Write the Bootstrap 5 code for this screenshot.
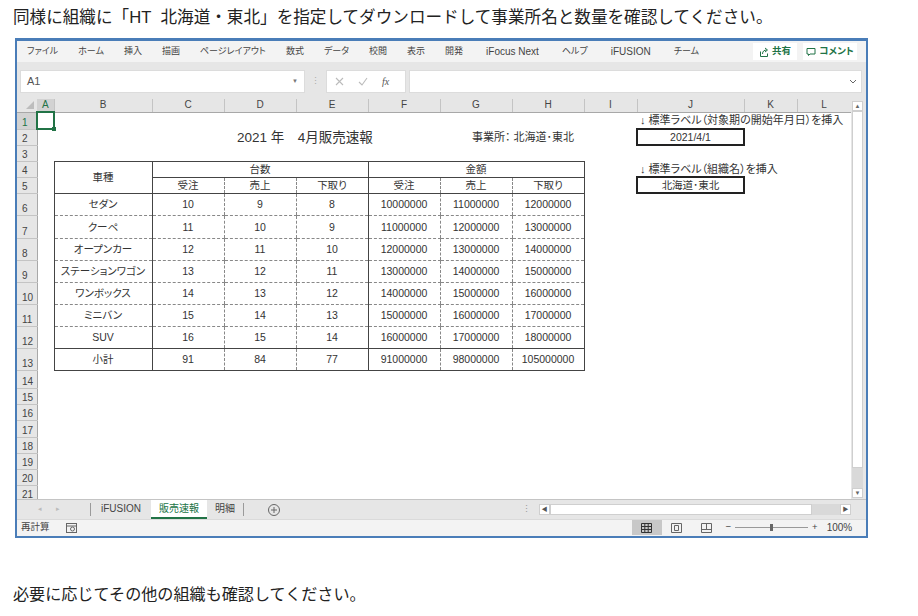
<!DOCTYPE html>
<html lang="ja">
<head>
<meta charset="UTF-8" />
<meta name="viewport" content="width=device-width, initial-scale=1.0" />
<title>販売速報</title>
<link href="https://cdn.jsdelivr.net/npm/bootstrap@5.3.0/dist/css/bootstrap.min.css" rel="stylesheet" />
<script src="https://cdn.jsdelivr.net/npm/bootstrap@5.3.0/dist/js/bootstrap.bundle.min.js"></script>
<style>
html, body { background: #fff; }
body { font-family: "Liberation Sans", "Noto Sans CJK JP", sans-serif; color: #222; height: 616px; overflow: hidden; }
.guide-top { font-size: 16.6px; line-height: 20px; padding: 8px 0 0 13px; margin: 0 0 10px; white-space: nowrap; }
.guide-bottom { font-size: 16.1px; line-height: 20px; padding-left: 13px; margin: 46px 0 0; white-space: nowrap; }
.xl-window { width: 853px; height: 500px; margin-left: 15px; border: 2px solid #4a7db8; border-top-width: 3px; background: #f3f3f3; color: #444; font-size: 10px; font-feature-settings: "palt"; }
.xl-tabs { height: 21px; padding: 0 9px 0 10px; background: #f3f3f3; }
.xl-tabs span { white-space: nowrap; }
.xl-tablist { gap: 20px; font-size: 9px; }
.xl-tablatin { font-size: 10px; margin: 0 3px; }
.xl-action { height: 17px; background: #fff; color: #217346; font-weight: 700; font-size: 9.5px; gap: 3px; }
.xl-share { width: 44px; }
.xl-comment { width: 54px; }
.xl-formula { height: 37px; background: #e6e6e6; padding: 8px 4px 6px 3px; }
.xl-box { background: #fff; border: 1px solid #dcdcdc; height: 23px; }
.xl-name { width: 285px; padding: 0 6px; font-size: 11px; color: #555; }
.xl-dots { width: 21px; text-align: center; color: #aaa; font-size: 9px; }
.xl-fx { width: 80px; margin-right: 3px; padding: 0 8px; gap: 14px; }
.xl-body { height: 400px; background: #fff; }
.xl-cells { width: 834px; height: 400px; overflow: hidden; }
.xl-sheet { table-layout: fixed; width: 834px; font-size: 10.5px; color: #333; }
.xl-sheet th, .xl-sheet td { padding: 0; text-align: center; white-space: nowrap; font-weight: 400; line-height: 1; overflow: visible; }
.xl-sheet .colhead th { height: 13px; background: #e6e6e6; border-bottom: 1px solid #a8a8a8; border-right: 1px solid #c4c4c4; font-size: 10px; color: #444; }
.xl-sheet .colhead th.is-active { background: #d2d2d2; color: #217346; border-bottom: 2px solid #217346; }
.xl-sheet .colhead th.corner { border-right: 0; text-align: right; padding-right: 3px; }
.xl-sheet th.rownum { background: #e6e6e6; border-bottom: 1px solid #c4c4c4; border-right: 1px solid #a8a8a8; font-size: 10px; vertical-align: bottom; text-align: left; padding: 0 0 1px 5px; color: #444; }
.xl-sheet th.rownum.is-active { background: #d2d2d2; color: #217346; border-right: 2px solid #217346; }
.xl-sheet td { vertical-align: middle; padding-top: 1px; }
.cell-active { border: 2px solid #217346; position: relative; }
.cell-active::after { content: ""; position: absolute; right: -3px; bottom: -3px; width: 4px; height: 4px; background: #217346; border: 0; }
.cell-title { font-size: 13.5px; text-align: left !important; padding-left: 85px !important; }
.cell-office { text-align: left !important; padding-left: 32px !important; font-size: 11px; }
.cell-note { text-align: left !important; padding-left: 3px !important; font-size: 11px; }
.cell-boxed { border: 2px solid #222; }
.rule-head { border: 1px solid #444; }
.b-solid-l { border-left: 1px solid #444; }
.b-solid-r { border-right: 1px solid #444; }
.b-solid-t { border-top: 1px solid #444; }
.b-solid-b { border-bottom: 1px solid #444; }
.b-dash-l { border-left: 1px dashed #888; }
.b-dash-b { border-bottom: 1px dashed #888; }
.xl-vscroll { width: 15px; background: #e6e6e6; padding: 2px 2px 0 1px; }
.xl-vbtn { height: 10px; width: 11px; background: #fff; border: 1px solid #cfcfcf; color: #666; font-size: 6px; line-height: 8px; text-align: center; }
.xl-vthumb { height: 357px; width: 11px; background: #fff; border: 1px solid #cfcfcf; }
.xl-vtrack { width: 11px; background: #d9d9d9; height: 20px; }
.xl-sheetbar { height: 20px; background: #e6e6e6; border-top: 1px solid #c4c4c4; font-size: 10px; }
.xl-arrows { width: 73px; gap: 14px; padding-left: 21px; color: #bbb; font-size: 7px; }
.xl-sep { width: 1px; height: 13px; background: #9a9a9a; }
.xl-sheettab { padding: 0 10px; white-space: nowrap; height: 19px; line-height: 18px; }
.xl-sheettab.is-on { background: #fff; color: #217346; padding: 0; width: 56px; text-align: center; border-bottom: 2px solid #217346; }
.xl-sheettab.is-plain { padding: 0 8px; width: 36px; }
.xl-plus { margin-left: 24px; width: 12px; height: 12px; }
.xl-hdots { margin: 0 7px 0 240px; width: 12px; color: #999; font-size: 9px; text-align: center; }
.xl-hbtn { width: 11px; height: 11px; background: #fff; border: 1px solid #cfcfcf; font-size: 6px; line-height: 9px; color: #555; text-align: center; }
.xl-hthumb { width: 262px; height: 11px; background: #fff; border: 1px solid #cfcfcf; }
.xl-htrack { width: 28px; height: 11px; background: #d9d9d9; }
.xl-status { height: 16px; background: #f3f3f3; border-top: 1px solid #dadada; font-size: 9.5px; }
.xl-view { width: 30px; height: 15px; }
.xl-view.is-on { background: #c8c8c8; margin-left: 555px; }
.xl-zoombar { width: 73px; height: 1px; background: #999; position: relative; margin: 0 4px; }
.xl-zoomthumb { position: absolute; left: 35px; top: -3px; width: 3px; height: 7px; background: #666; }
.xl-pct { font-size: 10px; margin-left: 9px; }
</style>
</head>
<body class="m-0">
<p class="guide-top">同様に組織に「HT&nbsp;&nbsp;北海道・東北」を指定してダウンロードして事業所名と数量を確認してください。</p>

<div class="xl-window d-flex flex-column">
  <div class="xl-tabs d-flex align-items-center justify-content-between">
    <div class="xl-tablist d-flex align-items-center">
      <span>ファイル</span><span>ホーム</span><span>挿入</span><span>描画</span><span>ページレイアウト</span><span>数式</span><span>データ</span><span>校閲</span><span>表示</span><span>開発</span><span class="xl-tablatin">iFocus Next</span><span>ヘルプ</span><span class="xl-tablatin">iFUSION</span><span>チーム</span>
    </div>
    <div class="d-flex" style="gap:6px">
      <div class="xl-action xl-share d-flex align-items-center justify-content-center">
        <svg width="10" height="10" viewBox="0 0 10 10" fill="none" stroke="#217346"><path d="M1.500 4.500v5h7v-3M3.500 7c0-3 2-4 4-4M6 1l2.500 2L6 5"/></svg><span>共有</span>
      </div>
      <div class="xl-action xl-comment d-flex align-items-center justify-content-center">
        <svg width="10" height="10" viewBox="0 0 10 10" fill="none" stroke="#217346"><path d="M1 1.500h8v5.500H4L2.500 8.500V7H1z"/></svg><span>コメント</span>
      </div>
    </div>
  </div>

  <div class="xl-formula d-flex align-items-stretch">
    <div class="xl-box xl-name d-flex align-items-center justify-content-between"><span>A1</span><span style="font-size:6px;color:#777">▼</span></div>
    <div class="xl-dots d-flex align-items-center justify-content-center">⋮</div>
    <div class="xl-box xl-fx d-flex align-items-center">
      <svg width="9" height="9" viewBox="0 0 9 9" stroke="#bbb" fill="none" stroke-width="1.100"><path d="M1 1l7 7M8 1L1 8"/></svg>
      <svg width="10" height="9" viewBox="0 0 10 9" stroke="#bbb" fill="none" stroke-width="1.100"><path d="M1 5l3 3 5-7"/></svg>
      <span style="font-family:'Liberation Serif',serif;font-style:italic;font-size:10px;color:#555">fx</span>
    </div>
    <div class="xl-box flex-grow-1 d-flex align-items-center justify-content-end pe-1"><svg width="8" height="5" viewBox="0 0 8 5" fill="none" stroke="#666"><path d="M1 1l3 3 3-3"/></svg></div>
  </div>

  <div class="xl-body d-flex">
    <div class="xl-cells">
      <table class="xl-sheet">
        <colgroup>
          <col style="width:20px" /><col style="width:17px" /><col style="width:98px" /><col style="width:72px" /><col style="width:72px" /><col style="width:72px" /><col style="width:72px" /><col style="width:72px" /><col style="width:72px" /><col style="width:53px" /><col style="width:107px" /><col style="width:53px" /><col style="width:54px" />
        </colgroup>
        <tbody id="sheetBody">
          <tr class="colhead">
            <th class="corner"><svg class="d-block ms-auto" width="8" height="8" viewBox="0 0 8 8"><path d="M8 0v8H0z" fill="#bdbdbd"/></svg></th>
            <th class="is-active">A</th><th>B</th><th>C</th><th>D</th><th>E</th><th>F</th><th>G</th><th>H</th><th>I</th><th>J</th><th>K</th><th>L</th>
          </tr>
          <tr style="height:17px"><th class="rownum is-active">1</th><td class="cell-active"></td><td></td><td></td><td></td><td></td><td></td><td></td><td></td><td></td><td colspan="3" class="cell-note">↓ 標準ラベル（対象期の開始年月日）を挿入</td></tr>
          <tr style="height:16px"><th class="rownum">2</th><td></td><td></td><td colspan="4" class="cell-title">2021 年　4月販売速報</td><td colspan="2" class="cell-office">事業所： 北海道･東北</td><td></td><td class="cell-boxed">2021/4/1</td><td></td><td></td></tr>
          <tr style="height:16px"><th class="rownum">3</th><td colspan="12"></td></tr>
          <tr style="height:16px"><th class="rownum">4</th><td></td><td rowspan="2" class="rule-head">車種</td><td colspan="3" class="rule-head">台数</td><td colspan="3" class="rule-head">金額</td><td></td><td colspan="3" class="cell-note">↓ 標準ラベル（組織名）を挿入</td></tr>
          <tr style="height:16px"><th class="rownum">5</th><td></td><td class="b-solid-l b-solid-b">受注</td><td class="b-dash-l b-solid-b">売上</td><td class="b-dash-l b-solid-b">下取り</td><td class="b-solid-l b-solid-b">受注</td><td class="b-dash-l b-solid-b">売上</td><td class="b-dash-l b-solid-b b-solid-r">下取り</td><td></td><td class="cell-boxed">北海道･東北</td><td></td><td></td></tr>
        </tbody>
      </table>
    </div>
    <div class="xl-vscroll d-flex flex-column">
      <div class="xl-vbtn">▲</div>
      <div class="xl-vthumb"></div>
      <div class="xl-vtrack"></div>
      <div class="xl-vbtn">▼</div>
    </div>
  </div>

  <div class="xl-sheetbar d-flex align-items-center">
    <div class="xl-arrows d-flex"><span>◂</span><span>▸</span></div>
    <div class="xl-sep"></div>
    <div class="xl-sheettab">iFUSION</div>
    <div class="xl-sheettab is-on">販売速報</div>
    <div class="xl-sheettab is-plain">明細</div>
    <div class="xl-sep"></div>
    <svg class="xl-plus" viewBox="0 0 12 12" fill="none" stroke="#666"><circle cx="6" cy="6" r="5.500"/><path d="M6 3v6M3 6h6"/></svg>
    <div class="xl-hdots">⋮</div>
    <div class="xl-hbtn">◀</div>
    <div class="xl-hthumb"></div>
    <div class="xl-htrack"></div>
    <div class="xl-hbtn">▶</div>
  </div>

  <div class="xl-status d-flex align-items-center">
    <span class="ps-1">再計算</span>
    <svg class="ms-3" width="11" height="10" viewBox="0 0 11 10" fill="none" stroke="#666"><rect x=".5" y=".5" width="10" height="9"/><path d="M.5 3h10"/><circle cx="6.500" cy="6" r="2"/></svg>
    <div class="xl-view is-on d-flex align-items-center justify-content-center">
      <svg width="11" height="10" viewBox="0 0 11 10" fill="none" stroke="#333"><path d="M.5.5h10v9H.5zM.5 3.500h10M.5 6.500h10M3.800.5v9M7.200.5v9"/></svg>
    </div>
    <div class="xl-view d-flex align-items-center justify-content-center">
      <svg width="11" height="10" viewBox="0 0 11 10" fill="none" stroke="#666"><path d="M.5.5h10v9H.5zM3.500 2.500h4v5h-4z"/></svg>
    </div>
    <div class="xl-view d-flex align-items-center justify-content-center">
      <svg width="11" height="10" viewBox="0 0 11 10" fill="none" stroke="#666"><path d="M.5.5h10v9H.5zM.5 6.500h10M5.500.5v6"/></svg>
    </div>
    <span class="ms-1">−</span>
    <div class="xl-zoombar"><div class="xl-zoomthumb"></div></div>
    <span>+</span>
    <span class="xl-pct">100%</span>
  </div>
</div>

<p class="guide-bottom">必要に応じてその他の組織も確認してください。</p>

<script>
// データ行をまとめて生成
var rows = [
    ["セダン", 10, 9, 8, 10000000, 11000000, 12000000, 22],
    ["クーペ", 11, 10, 9, 11000000, 12000000, 13000000, 23],
    ["オープンカー", 12, 11, 10, 12000000, 13000000, 14000000, 22],
    ["ステーションワゴン", 13, 12, 11, 13000000, 14000000, 15000000, 22],
    ["ワンボックス", 14, 13, 12, 14000000, 15000000, 16000000, 22],
    ["ミニバン", 15, 14, 13, 15000000, 16000000, 17000000, 22],
    ["SUV", 16, 15, 14, 16000000, 17000000, 18000000, 22],
    ["小計", 91, 84, 77, 91000000, 98000000, 105000000, 22]
];
var body = document.getElementById("sheetBody");
var html = "";
rows.forEach(function (r, i) {
    var last = i === rows.length - 1;
    var bottom = last ? " b-solid-b" : (i === rows.length - 2 ? " b-solid-b" : " b-dash-b");
    html += '<tr style="height:' + r[7] + 'px"><th class="rownum">' + (i + 6) + "</th><td></td>";
    html += '<td class="b-solid-l b-solid-r' + bottom + '">' + r[0] + "</td>";
    for (var c = 1; c <= 6; c++) {
        var left = c === 4 ? " b-solid-l" : (c === 1 ? "" : " b-dash-l");
        var right = c === 6 ? " b-solid-r" : "";
        html += '<td class="' + left + right + bottom + '">' + r[c] + "</td>";
    }
    html += '<td colspan="4"></td></tr>';
});
var tall = [18, 16, 16, 17, 16, 16, 16, 16];
tall.forEach(function (h, i) {
    html += '<tr style="height:' + h + 'px"><th class="rownum">' + (i + 14) + '</th><td colspan="12"></td></tr>';
});
body.insertAdjacentHTML("beforeend", html);
</script>
</body>
</html>
